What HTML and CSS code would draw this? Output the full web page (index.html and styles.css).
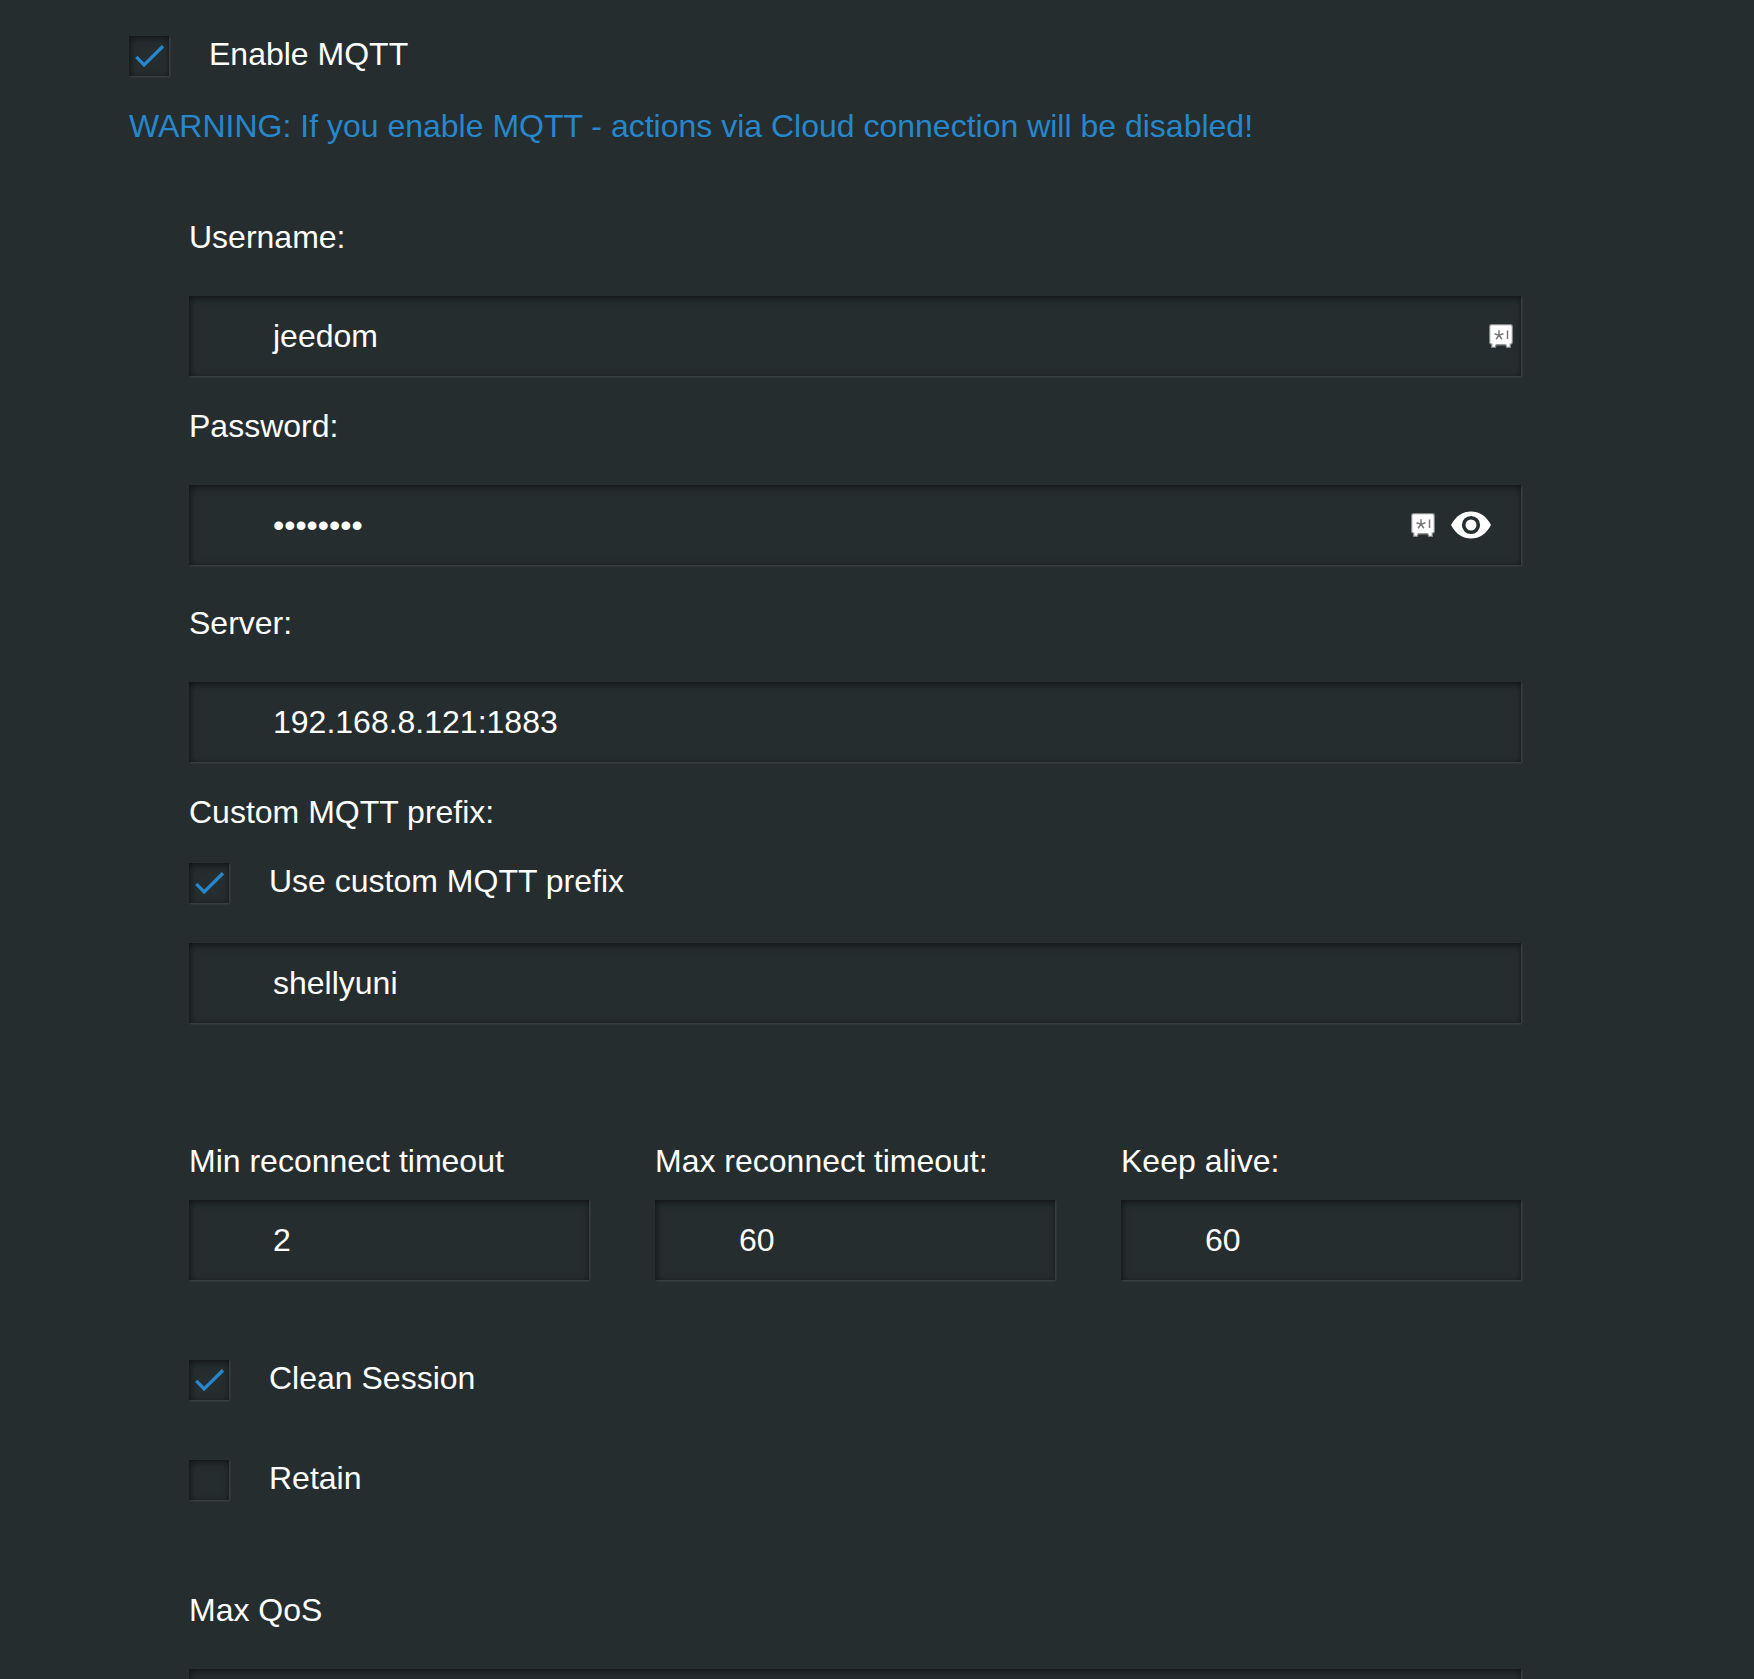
FILE: index.html
```html
<!DOCTYPE html>
<html lang="en">
<head>
<meta charset="utf-8">
<title>MQTT settings</title>
<link rel="stylesheet" href="styles.css">
</head>
<body>
<svg class="defs" aria-hidden="true">
  <symbol id="check" viewBox="0 0 40 40"><path d="M7.300 20.900l7.800 8L34 10.300" fill="none" stroke="#2687cc" stroke-width="3.300"/></symbol>
  <symbol id="safe" viewBox="0 0 24 24">
    <path d="M2.500.7h19q1.800 0 1.800 1.800v16q0 1.500-1.500 1.700h-.5v3.100h-3.600l-.9-2.500H7.200l-.9 2.500H2.700v-3.100h-.5Q.7 20 .7 18.500v-16Q.7.7 2.500.7z" fill="#fff" stroke="#858888" stroke-width="1.200"/>
    <path d="M10 6.200v5M10 11.200L5.500 9.800M10 11.200l4.500-1.400M10 11.200l-2.900 4M10 11.200l2.900 4M18.500 6.500v8.500" fill="none" stroke="#777" stroke-width="1.500"/>
  </symbol>
  <symbol id="eye" viewBox="0 0 40 28">
    <path d="M0 14C5 4.500 12 .5 20 .5S35 4.500 40 14C35 23.500 28 27.500 20 27.500S5 23.500 0 14z" fill="#fff"/>
    <circle cx="20" cy="14" r="7.300" fill="none" stroke="#262d2f" stroke-width="3.600"/>
  </symbol>
</svg>
<main class="page">
  <label class="option"><span class="box"><svg><use href="#check"/></svg></span>Enable MQTT</label>
  <p class="warning">WARNING: If you enable MQTT - actions via Cloud connection will be disabled!</p>
  <form class="form">
    <div class="field">
      <span class="label">Username:</span>
      <div class="input"><span class="value">jeedom</span><svg class="safe"><use href="#safe"/></svg></div>
    </div>
    <div class="field password">
      <span class="label">Password:</span>
      <div class="input"><span class="value">••••••••</span><svg class="safe"><use href="#safe"/></svg><svg class="eye"><use href="#eye"/></svg></div>
    </div>
    <div class="field server">
      <span class="label">Server:</span>
      <div class="input"><span class="value">192.168.8.121:1883</span></div>
    </div>
    <div class="prefix">
      <span class="label">Custom MQTT prefix:</span>
      <label class="option"><span class="box"><svg><use href="#check"/></svg></span>Use custom MQTT prefix</label>
      <div class="input"><span class="value">shellyuni</span></div>
    </div>
    <div class="timeouts">
      <div class="field"><span class="label">Min reconnect timeout</span><div class="input"><span class="value">2</span></div></div>
      <div class="field"><span class="label">Max reconnect timeout:</span><div class="input"><span class="value">60</span></div></div>
      <div class="field"><span class="label">Keep alive:</span><div class="input"><span class="value">60</span></div></div>
    </div>
    <div class="options">
      <label class="option"><span class="box"><svg><use href="#check"/></svg></span>Clean Session</label>
      <label class="option"><span class="box"></span>Retain</label>
    </div>
    <div class="field qos">
      <span class="label">Max QoS</span>
      <div class="input"></div>
    </div>
  </form>
</main>
</body>
</html>
```
FILE: styles.css
```css
* { box-sizing: border-box; }
body {
  margin: 0;
  height: 1679px;
  overflow: hidden;
  background: #262d2f;
  color: #fff;
  font: 32px/36px "Liberation Sans", Arial, sans-serif;
}
.defs { position: absolute; width: 0; height: 0; }
.page { padding: 36px 233px 0 129px; }
.option { display: flex; gap: 40px; height: 40px; }
.box {
  flex: none;
  width: 40px;
  height: 40px;
}
.box svg { display: block; width: 40px; height: 40px; }
.box, .input {
  background: #262d2f;
  box-shadow: inset 1px 2px 7px rgba(0, 0, 0, .6), 1px 1px 2px rgba(255, 255, 255, .12);
}
.warning { margin: 32px 0 0; color: #2687cc; white-space: nowrap; }
.form { display: flex; flex-direction: column; margin: 75px 0 0; padding-left: 60px; }
.field { display: flex; flex-direction: column; gap: 41px; }
.input { display: flex; align-items: center; height: 80px; padding-left: 84px; }
.value { flex: 1; }
.safe { width: 24px; height: 24px; margin-right: 8px; }
.password { margin-top: 32px; }
.password .safe { margin-right: 16px; }
.eye { width: 40px; height: 28px; margin-right: 30px; }
.server { margin-top: 40px; }
.prefix { display: flex; flex-direction: column; margin-top: 32px; }
.prefix .option { margin: 33px 0 40px; }
.timeouts { display: grid; grid-template-columns: repeat(3, 400px); gap: 66px; margin-top: 120px; }
.timeouts .field { gap: 21px; }
.options { display: grid; gap: 60px; margin-top: 80px; }
.qos { margin-top: 92px; }
```
